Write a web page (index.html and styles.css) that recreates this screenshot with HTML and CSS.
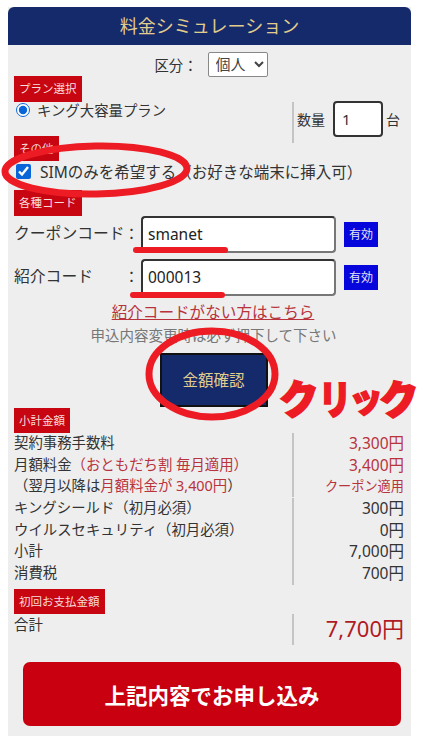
FILE: index.html
```html
<!DOCTYPE html>
<html lang="ja">
<head>
<meta charset="utf-8">
<title>料金シミュレーション</title>
<link rel="stylesheet" href="styles.css">
</head>
<body>
<main class="panel">
  <h1 class="title">料金シミュレーション</h1>
  <div class="kubun">
    <label class="kubun-label" for="kubun">区分：</label>
    <select class="kubun-select" id="kubun"><option>個人</option></select>
  </div>
  <div class="tag">プラン選択</div>
  <div class="plan">
    <label class="plan-left"><input class="radio" type="radio" checked> キング大容量プラン</label>
    <div class="plan-right"><span class="qty-label">数量</span><input class="qty" type="text" value="1"><span>台</span></div>
  </div>
  <div class="tag">その他</div>
  <label class="sim"><input class="check" type="checkbox" checked>SIMのみを希望する（お好きな端末に挿入可）</label>
  <div class="tag">各種コード</div>
  <div class="code-row">
    <span class="code-label">クーポンコード</span><span class="colon">：</span>
    <input class="code-input" type="text" value="smanet">
    <span class="valid">有効</span>
  </div>
  <div class="code-row">
    <span class="code-label">紹介コード</span><span class="colon">：</span>
    <input class="code-input" type="text" value="000013">
    <span class="valid">有効</span>
  </div>
  <a class="nolink" href="#">紹介コードがない方はこちら</a>
  <p class="note">申込内容変更時は必ず押下して下さい</p>
  <div class="confirm-wrap"><button class="confirm">金額確認</button></div>
  <div class="tag">小計金額</div>
  <div class="amounts">
    <div class="amount-group">
      <div class="row"><span>契約事務手数料</span><span class="val red">3,300円</span></div>
      <div class="row"><span>月額料金<span class="red">（おともだち割 毎月適用）</span></span><span class="val red">3,400円</span></div>
      <div class="row"><span>（翌月以降は<span class="red">月額料金が 3,400円</span>）</span><span class="val red small">クーポン適用</span></div>
    </div>
    <div class="amount-group">
      <div class="row"><span>キングシールド（初月必須）</span><span class="val">300円</span></div>
      <div class="row"><span>ウイルスセキュリティ（初月必須）</span><span class="val">0円</span></div>
      <div class="row"><span>小計</span><span class="val">7,000円</span></div>
      <div class="row"><span>消費税</span><span class="val">700円</span></div>
    </div>
  </div>
  <div class="tag tag-first">初回お支払金額</div>
  <div class="total"><span class="total-label">合計</span><span class="total-val">7,700円</span></div>
  <div class="apply-wrap"><button class="apply">上記内容でお申し込み</button></div>

  <svg class="marks" viewBox="0 0 421 736" aria-hidden="true">
    <ellipse cx="96" cy="170" rx="91" ry="24" fill="none" stroke="#ed1c24" stroke-width="7" transform="rotate(-1 96 170)"/>
    <ellipse cx="212" cy="374" rx="63" ry="43" fill="none" stroke="#ed1c24" stroke-width="7"/>
    <path d="M136 250H225" stroke="#ed1c24" stroke-width="6" stroke-linecap="round"/>
    <path d="M133 295H222" stroke="#ed1c24" stroke-width="6" stroke-linecap="round"/>
  </svg>
  <div class="click-note"><span class="ck ck-1">ク</span><span class="ck ck-2">リ</span><span class="ck ck-3">ッ</span><span class="ck ck-4">ク</span></div>
</main>
</body>
</html>
```
FILE: styles.css
```css
* { box-sizing: border-box; }
html, body { margin: 0; padding: 0; background: #fff; }
body {
  height: 736px;
  overflow: hidden;
  font-family: "Noto Sans", "Noto Sans CJK JP", sans-serif;
  font-size: 14.4px;
  color: #333;
}
.panel {
  position: relative;
  width: 403px;
  height: 729px;
  margin: 7px 0 0 8px;
  padding-bottom: 10px;
  background: #eee;
}
.title {
  margin: 0;
  height: 38px;
  border-radius: 6px 6px 0 0;
  background: #152a6b;
  color: #e3cd8c;
  font-size: 18px;
  font-weight: 400;
  line-height: 38px;
  text-align: center;
}
.kubun {
  height: 31px;
  display: flex;
  justify-content: center;
  align-items: center;
  gap: 10px;
  padding-left: 3px;
}
.kubun-label { margin-top: 7px; }
.kubun-select {
  width: 60px;
  height: 25px;
  margin-top: 7px;
  border: 1px solid #888;
  border-radius: 2px;
  background: #fff;
  font: inherit;
  font-size: 15px;
  color: #444;
  padding-left: 3px;
}
.tag {
  width: max-content;
  height: 25.5px;
  margin-left: 6px;
  padding: 0 5px;
  background: #c80612;
  color: #f7dcdc;
  font-size: 11.5px;
  line-height: 25px;
}
.plan {
  display: flex;
  height: 34px;
  padding-left: 8px;
}
.plan-left {
  width: 277px;
  display: flex;
  align-items: flex-start;
  gap: 7px;
  line-height: 17px;
}
.radio {
  width: 14px;
  height: 14px;
  margin: 1px 0 0;
  accent-color: #0a66d8;
}
.plan-right {
  height: 41px;
  display: flex;
  align-items: center;
  margin-left: -1px;
  padding-left: 3px;
  padding-bottom: 6px;
  border-left: 2px solid #c4c4c4;
  font-size: 14px;
}
.qty-label { margin-right: 8px; }
.qty {
  width: 50px;
  height: 36px;
  margin-right: 3px;
  padding: 0 7px;
  border: 2px solid #333;
  border-radius: 4px;
  background: #fff;
  font: inherit;
  font-size: 15px;
  color: #333;
}
.sim {
  display: flex;
  align-items: flex-start;
  height: 29px;
  padding: 2px 0 0 8px;
  gap: 9px;
  font-size: 15.5px;
  line-height: 18px;
  white-space: nowrap;
}
.check {
  width: 15px;
  height: 15px;
  margin: 1px 0 0;
  accent-color: #0a66d8;
}
.code-row {
  display: flex;
  align-items: center;
  height: 37px;
  margin-bottom: 6px;
  padding-left: 6px;
}
.code-label { width: 110px; font-size: 15.8px; line-height: 34px; height: 37px; white-space: nowrap; }
.colon { width: 17px; font-size: 15px; line-height: 34px; height: 37px; }
.code-input {
  width: 195px;
  height: 37px;
  padding: 0 5px;
  border: 2px solid #333;
  border-radius: 4px;
  border-right-color: #777;
  border-bottom-color: #777;
  background: #fff;
  font: inherit;
  font-size: 15.5px;
  color: #222;
}
.valid {
  width: 34px;
  height: 25px;
  margin-left: 8px;
  background: #0505dc;
  color: #e6e6f5;
  font-size: 12px;
  line-height: 25px;
  text-align: center;
}
.nolink {
  display: block;
  margin-top: -2px;
  padding-left: 7px;
  color: #b8333c;
  font-size: 15.6px;
  line-height: 24px;
  text-align: center;
}
.note {
  margin: 0;
  padding-left: 8px;
  color: #777;
  font-size: 14.5px;
  line-height: 22px;
  text-align: center;
}
.confirm-wrap {
  display: flex;
  justify-content: center;
  padding-top: 7px;
  padding-left: 8px;
  height: 62px;
}
.confirm {
  width: 108px;
  height: 54px;
  border: 2px solid #111;
  background: #152a6b;
  color: #e3cd8c;
  font-family: inherit;
  font-size: 15.5px;
}
.amounts {
  padding-left: 6px;
}
.amount-group {
  width: 279px;
}
.row {
  position: relative;
  display: flex;
  justify-content: space-between;
  width: 390px;
  height: 21.7px;
  line-height: 20px;
  white-space: nowrap;
}
.row::after {
  content: "";
  position: absolute;
  left: 278px;
  top: 0;
  bottom: 0;
  width: 2px;
  background: #c4c4c4;
}
.amount-group:first-child .row:last-child::after { bottom: 1px; }
.red { color: #b8333c; }
.val { font-size: 15.5px; }
.small { font-size: 13.2px; }
.tag-first { margin-top: 4px; }
.total {
  position: relative;
  display: flex;
  justify-content: space-between;
  height: 31px;
  padding-left: 6px;
  width: 396px;
}
.total::after {
  content: "";
  position: absolute;
  left: 284px;
  top: 0;
  bottom: 0;
  width: 2px;
  background: #c4c4c4;
}
.total-label { padding-top: 2px; line-height: 18px; }
.total-val {
  color: #b01a24;
  font-size: 22px;
  line-height: 29px;
}
.apply-wrap {
  padding: 17px 10px 0 15px;
}
.apply {
  width: 378px;
  height: 64px;
  border: 0;
  border-radius: 7px;
  background: #c8000f;
  color: #fff;
  font-family: inherit;
  font-size: 21.5px;
  font-weight: 700;
}
.marks {
  position: absolute;
  left: -8px;
  top: -7px;
  width: 421px;
  height: 736px;
  pointer-events: none;
}
.click-note {
  position: absolute;
  left: 271px;
  top: 368px;
  display: flex;
  color: #ed1c24;
  -webkit-text-stroke: 2px #ed1c24;
  font-family: "Noto Sans CJK JP", sans-serif;
  font-size: 40px;
  font-weight: 900;
  line-height: 44px;
  white-space: nowrap;
}
.ck { display: block; }
.ck-1 { transform: rotate(-4deg); margin-right: -4px; }
.ck-2 { transform: scaleX(0.8); margin-right: -9px; }
.ck-3 { transform: scale(0.85) rotate(-6deg); margin-right: -7px; }
.ck-4 { transform: rotate(-6deg); }
```
